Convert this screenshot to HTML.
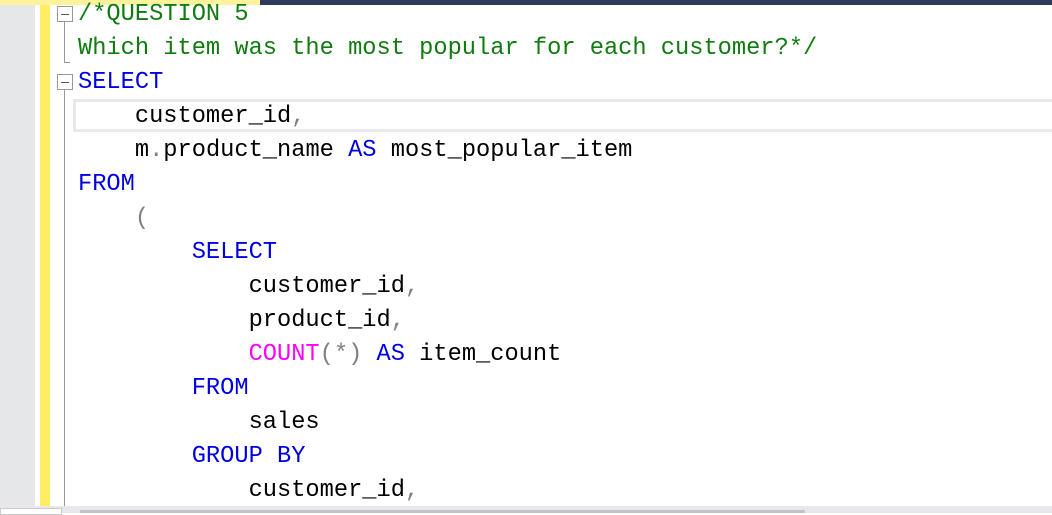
<!DOCTYPE html>
<html><head><style>
body{margin:0;width:1052px;height:513px;overflow:hidden;background:#fff;position:relative;font-family:"Liberation Mono",monospace}
.a{position:absolute}
.l{position:absolute;left:78px;height:34px;line-height:34px;font-size:23.7px;white-space:pre;color:#000}
.c{color:#107c10}.k{color:#0000e0}.g{color:#808080}.m{color:#ff00ff}
.box{position:absolute;left:57px;width:14px;height:14px;border:1px solid #999;background:#fff}
.box:after{content:"";position:absolute;left:3px;top:7px;width:8px;height:1px;background:#555}
</style></head><body>
<div class="a" style="left:0;top:0;width:35px;height:513px;background:#e6e7e8"></div>
<div class="a" style="left:40px;top:0;width:10px;height:506px;background:#ffee62"></div>
<div class="a" style="left:0;top:0;width:260px;height:5px;background:#fff29d"></div>
<div class="a" style="left:260px;top:0;width:792px;height:5px;background:#2d3a5a"></div>
<div class="a" style="left:64px;top:22px;width:1px;height:40px;background:#999"></div>
<div class="a" style="left:64px;top:62px;width:6px;height:1px;background:#999"></div>
<div class="a" style="left:64px;top:90px;width:1px;height:416px;background:#999"></div>
<div class="box" style="top:6px"></div>
<div class="box" style="top:74px"></div>
<div class="a" style="left:73px;top:99px;width:979px;height:27px;border-top:3px solid #e8e8ee;border-bottom:3px solid #e8e8ee;border-left:3px solid #e8e8ee;box-sizing:content-box"></div>
<div class="l c" style="top:-2px">/*QUESTION 5</div>
<div class="l c" style="top:32px">Which item was the most popular for each customer?*/</div>
<div class="l k" style="top:66px">SELECT</div>
<div class="l" style="top:100px">    customer_id<span class="g">,</span></div>
<div class="l" style="top:134px">    m<span class="g">.</span>product_name <span class="k">AS</span> most_popular_item</div>
<div class="l k" style="top:168px">FROM</div>
<div class="l g" style="top:202px">    (</div>
<div class="l k" style="top:236px">        SELECT</div>
<div class="l" style="top:270px">            customer_id<span class="g">,</span></div>
<div class="l" style="top:304px">            product_id<span class="g">,</span></div>
<div class="l" style="top:338px">            <span class="m">COUNT</span><span class="g">(*)</span> <span class="k">AS</span> item_count</div>
<div class="l k" style="top:372px">        FROM</div>
<div class="l" style="top:406px">            sales</div>
<div class="l k" style="top:440px">        GROUP BY</div>
<div class="l" style="top:474px">            customer_id<span class="g">,</span></div>
<div class="a" style="left:0;top:506px;width:1052px;height:7px;background:#e8e8ec"></div>
<div class="a" style="left:0;top:508px;width:60px;height:5px;background:#fff;border:1px solid #ccc"></div>
<div class="a" style="left:80px;top:510px;width:725px;height:3px;background:#c2c3c9"></div>
</body></html>
